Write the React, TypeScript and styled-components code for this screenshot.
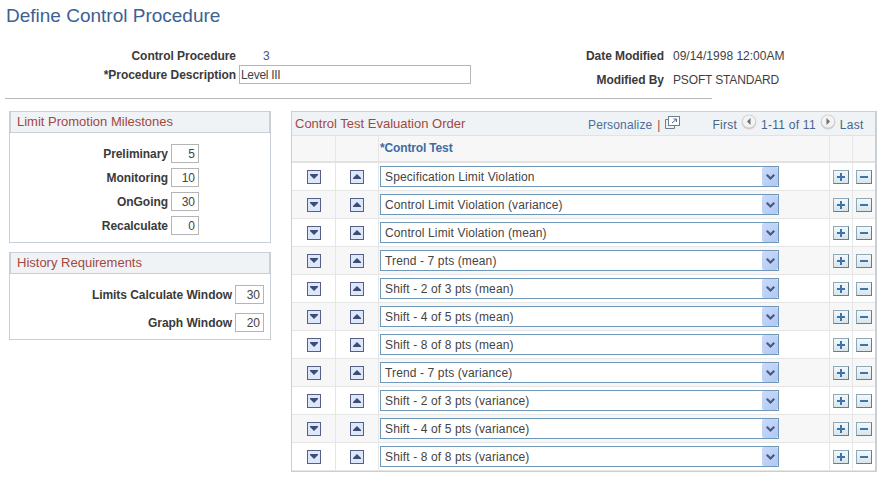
import React from 'react'
import styled, { createGlobalStyle } from 'styled-components'

const GlobalStyle = createGlobalStyle`
    html, body {
        margin: 0;
        padding: 0;
        background: #ffffff;
    }
    body {
        font-family: "Liberation Sans", Arial, sans-serif;
        font-size: 12px;
        color: #3a3a3a;
    }
`

const Page = styled.div`
    width: 883px;
    height: 478px;
    overflow: hidden;
`

const Title = styled.h1`
    margin: 0;
    padding: 5px 0 0 6px;
    height: 40px;
    box-sizing: border-box;
    font-size: 19px;
    line-height: 22px;
    font-weight: normal;
    color: #3d6192;
`

const Summary = styled.div`
    display: grid;
    grid-template-columns: 236px 235px 193px auto;
    grid-template-rows: 16px auto;
    align-content: start;
    height: 56px;
    padding-top: 8px;
    box-sizing: border-box;
`

const SummaryLabel = styled.div`
    font-weight: bold;
    text-align: right;
    line-height: 16px;
    height: 16px;
    letter-spacing: -0.05px;
`

const SummaryValue = styled.div<{ $indent: number }>`
    padding-left: ${({ $indent }) => $indent}px;
    line-height: 16px;
    height: 16px;
    color: #46587c;
`

const PlainValue = styled(SummaryValue)`
    color: #3f3f3f;
`

const LabelLower = styled(SummaryLabel)`
    margin-top: 3px;
`

const ByLabel = styled(SummaryLabel)`
    margin-top: 8px;
`

const ByValue = styled(PlainValue)`
    margin-top: 8px;
    letter-spacing: -0.15px;
`

const DescriptionInput = styled.input`
    box-sizing: border-box;
    display: block;
    margin: 1px 0 0 3px;
    width: 232px;
    height: 19px;
    border: 1px solid #b5b5b5;
    padding: 0 1px;
    font: 12px "Liberation Sans", Arial, sans-serif;
    letter-spacing: -0.3px;
    color: #444444;
    background: #ffffff;
    outline: none;
`

const Divider = styled.hr`
    margin: 2px 0 12px 5px;
    width: 707px;
    height: 1px;
    border: 0;
    background: #b7b7b7;
`

const Content = styled.div`
    display: flex;
    align-items: flex-start;
    gap: 20px;
    padding-left: 9px;
`

const LeftColumn = styled.div`
    display: flex;
    flex-direction: column;
    gap: 9px;
    width: 262px;
`

const GroupBox = styled.section<{ $height: number }>`
    box-sizing: border-box;
    height: ${({ $height }) => $height}px;
    border: 1px solid #c9cfd6;
`

const GroupHeader = styled.div`
    box-sizing: border-box;
    height: 21px;
    padding-left: 6px;
    font-size: 13px;
    line-height: 20px;
    background: #f0f3f5;
    border-left: 1px solid #c9cfd6;
    border-right: 1px solid #c9cfd6;
    border-bottom: 1px solid #c9cfd6;
    color: #a2483f;
`

const GroupBody = styled.div<{ $rowGap: number, $top: number, $inputLeft: number }>`
    display: grid;
    grid-template-columns: ${({ $inputLeft }) => $inputLeft}px auto;
    justify-content: start;
    align-items: center;
    column-gap: 3px;
    row-gap: ${({ $rowGap }) => $rowGap}px;
    padding-top: ${({ $top }) => $top}px;
`

const FieldLabel = styled.label`
    font-weight: bold;
    text-align: right;
    letter-spacing: -0.05px;
`

const NumberInput = styled.input<{ $width: number }>`
    box-sizing: border-box;
    width: ${({ $width }) => $width}px;
    height: 19px;
    border: 1px solid #b5b5b5;
    padding: 0 3px;
    text-align: right;
    font: 12px "Liberation Sans", Arial, sans-serif;
    color: #444444;
    background: #ffffff;
    outline: none;
`

const GridBox = styled.section`
    box-sizing: border-box;
    width: 586px;
    height: 361px;
    border: 1px solid #c9cfd6;
    border-right-width: 2px;
    border-bottom-width: 2px;
`

const GridTitleBar = styled.div`
    display: flex;
    align-items: center;
    box-sizing: border-box;
    height: 24px;
    padding-left: 3px;
    background: #f0f3f5;
    border-bottom: 1px solid #dfe3e6;
`

const GridTitle = styled.div`
    font-size: 13px;
    color: #a2483f;
    width: 293px;
`

const GridLink = styled.span`
    margin-top: 3px;
    letter-spacing: 0.15px;
    color: #47709f;
`

const Separator = styled.span`
    margin: 3px 5px 0 5px;
    color: #a2483f;
`

const WindowIcon = styled.svg`
    display: block;
    margin-top: -3px;
    flex: none;
`

const NavText = styled.span`
    margin-top: 3px;
    letter-spacing: 0.25px;
    color: #47648a;
`

const PagerIcon = styled.svg`
    display: block;
    margin-top: -3px;
    flex: none;
`

const PagerNav = styled.div`
    display: flex;
    align-items: center;
    margin-left: 32px;
    gap: 4px;
`

const RowGrid = styled.div<{ $shaded?: boolean, $height: number }>`
    display: grid;
    grid-template-columns: 43px 43px 451px 23px 1fr;
    box-sizing: border-box;
    height: ${({ $height }) => $height}px;
    background: ${({ $shaded }) => $shaded ? '#f7f7f7' : '#ffffff'};
    border-bottom: 1px solid #e6e6e6;
`

const HeaderRow = styled(RowGrid)`
    background: #f7f7f7;
    border-bottom: 2px solid #e2e2e2;
`

const Cell = styled.div`
    display: flex;
    align-items: center;
    justify-content: center;
    border-left: 1px solid #e6e6e6;

    &:first-child {
        border-left: 0;
    }
`

const SelectCell = styled(Cell)`
    justify-content: flex-start;
    padding-left: 1px;
`

const ColumnHead = styled(Cell)`
    justify-content: flex-start;
    padding: 0 0 2px 1px;
    font-weight: bold;
    letter-spacing: -0.15px;
    color: #3d6ca3;
`

const Select = styled.div`
    box-sizing: border-box;
    display: flex;
    align-items: center;
    justify-content: space-between;
    width: 399px;
    height: 21px;
    padding-left: 4px;
    letter-spacing: 0.13px;
    background: #ffffff;
    border: 1px solid #6f97b7;
    color: #444444;
`

const SelectArrow = styled.span`
    display: flex;
    align-items: center;
    justify-content: center;
    width: 16px;
    height: 19px;
    border-radius: 2px;
    background: linear-gradient(135deg, #cbdaf9, #b1c7f4);
`

const MoveButton = styled.button`
    display: flex;
    align-items: center;
    justify-content: center;
    box-sizing: border-box;
    width: 14px;
    height: 14px;
    padding: 0;
    border: 1px solid #565f85;
    background: #dce7fc;
`

const EditButton = styled.button`
    display: flex;
    align-items: center;
    justify-content: center;
    box-sizing: border-box;
    width: 16px;
    height: 14px;
    padding: 0;
    border: 1px solid #8fa9b3;
    border-right-color: #5f7f8c;
    border-bottom-color: #5f7f8c;
    background: linear-gradient(#f3f8fa, #d9e6ea);
`

const items = [
    'Specification Limit Violation',
    'Control Limit Violation (variance)',
    'Control Limit Violation (mean)',
    'Trend - 7 pts (mean)',
    'Shift - 2 of 3 pts (mean)',
    'Shift - 4 of 5 pts (mean)',
    'Shift - 8 of 8 pts (mean)',
    'Trend - 7 pts (variance)',
    'Shift - 2 of 3 pts (variance)',
    'Shift - 4 of 5 pts (variance)',
    'Shift - 8 of 8 pts (variance)',
]

const milestones = [
    ['Preliminary', '5'],
    ['Monitoring', '10'],
    ['OnGoing', '30'],
    ['Recalculate', '0'],
]

const history = [
    ['Limits Calculate Window', '30'],
    ['Graph Window', '20'],
]

const TriangleDown = () => (
    <svg width="8" height="5" viewBox="0 0 8 5"><path d="M0 0h8v1L4 5 0 1z" fill="#3f4b72" /></svg>
)

const TriangleUp = () => (
    <svg width="8" height="5" viewBox="0 0 8 5"><path d="M0 5h8V4L4 0 0 4z" fill="#3f4b72" /></svg>
)

const Plus = () => (
    <svg width="8" height="8" viewBox="0 0 8 8"><path d="M3 0h2v3h3v2H5v3H3V5H0V3h3z" fill="#3d74b0" /></svg>
)

const Minus = () => (
    <svg width="8" height="8" viewBox="0 0 8 8"><path d="M0 3h8v2H0z" fill="#3d74b0" /></svg>
)

const Chevron = () => (
    <svg width="9" height="6" viewBox="0 0 9 6"><path d="M0 1.5L1.5 0l3 3 3-3L9 1.5 4.5 6z" fill="#465a80" /></svg>
)

const NewWindow = () => (
    <WindowIcon width="15" height="13" viewBox="0 0 15 13" fill="none" stroke="#6c7f90">
        <path d="M3.5 3.5h-3v9h9v-3" />
        <rect x="3.5" y="0.5" width="11" height="9" fill="#ffffff" />
        <path d="M7 7l4-3.5M8.5 3h3v3" stroke="#4f6b86" />
    </WindowIcon>
)

const PagerArrow = ({ $left }: { $left?: boolean }) => (
    <PagerIcon width="16" height="16" viewBox="0 0 16 16">
        <circle cx="8" cy="8" r="7.5" fill="#cfcfcf" />
        <circle cx="8" cy="7.4" r="6.2" fill="#f3f3f3" />
        <path d={$left ? 'M9.5 4v7L6 7.5z' : 'M6.5 4v7L10 7.5z'} fill="#6f6f6f" />
    </PagerIcon>
)

const App = () => (
    <Page>
        <GlobalStyle />
        <Title>Define Control Procedure</Title>
        <Summary>
            <SummaryLabel>Control Procedure</SummaryLabel>
            <SummaryValue $indent={27}>3</SummaryValue>
            <SummaryLabel>Date Modified</SummaryLabel>
            <PlainValue $indent={9}>09/14/1998 12:00AM</PlainValue>
            <LabelLower>*Procedure Description</LabelLower>
            <DescriptionInput defaultValue="Level III" />
            <ByLabel>Modified By</ByLabel>
            <ByValue $indent={9}>PSOFT STANDARD</ByValue>
        </Summary>
        <Divider />
        <Content>
            <LeftColumn>
                <GroupBox $height={132}>
                    <GroupHeader>Limit Promotion Milestones</GroupHeader>
                    <GroupBody $rowGap={5} $top={11} $inputLeft={158}>
                        {milestones.map(([label, value]) => (
                            <React.Fragment key={label}>
                                <FieldLabel>{label}</FieldLabel>
                                <NumberInput $width={28} defaultValue={value} />
                            </React.Fragment>
                        ))}
                    </GroupBody>
                </GroupBox>
                <GroupBox $height={88}>
                    <GroupHeader>History Requirements</GroupHeader>
                    <GroupBody $rowGap={9} $top={11} $inputLeft={222}>
                        {history.map(([label, value]) => (
                            <React.Fragment key={label}>
                                <FieldLabel>{label}</FieldLabel>
                                <NumberInput $width={29} defaultValue={value} />
                            </React.Fragment>
                        ))}
                    </GroupBody>
                </GroupBox>
            </LeftColumn>
            <GridBox>
                <GridTitleBar>
                    <GridTitle>Control Test Evaluation Order</GridTitle>
                    <GridLink>Personalize</GridLink>
                    <Separator>|</Separator>
                    <NewWindow />
                    <PagerNav>
                        <NavText>First</NavText>
                        <PagerArrow $left />
                        <NavText>1-11 of 11</NavText>
                        <PagerArrow />
                        <NavText>Last</NavText>
                    </PagerNav>
                </GridTitleBar>
                <HeaderRow $height={27}>
                    <Cell />
                    <Cell />
                    <ColumnHead>*Control Test</ColumnHead>
                    <Cell />
                    <Cell />
                </HeaderRow>
                {items.map((item, index) => (
                    <RowGrid key={index} $shaded={index % 2 === 1} $height={28}>
                        <Cell><MoveButton><TriangleDown /></MoveButton></Cell>
                        <Cell><MoveButton><TriangleUp /></MoveButton></Cell>
                        <SelectCell>
                            <Select>
                                {item}
                                <SelectArrow><Chevron /></SelectArrow>
                            </Select>
                        </SelectCell>
                        <Cell><EditButton><Plus /></EditButton></Cell>
                        <Cell><EditButton><Minus /></EditButton></Cell>
                    </RowGrid>
                ))}
            </GridBox>
        </Content>
    </Page>
)

export default App
